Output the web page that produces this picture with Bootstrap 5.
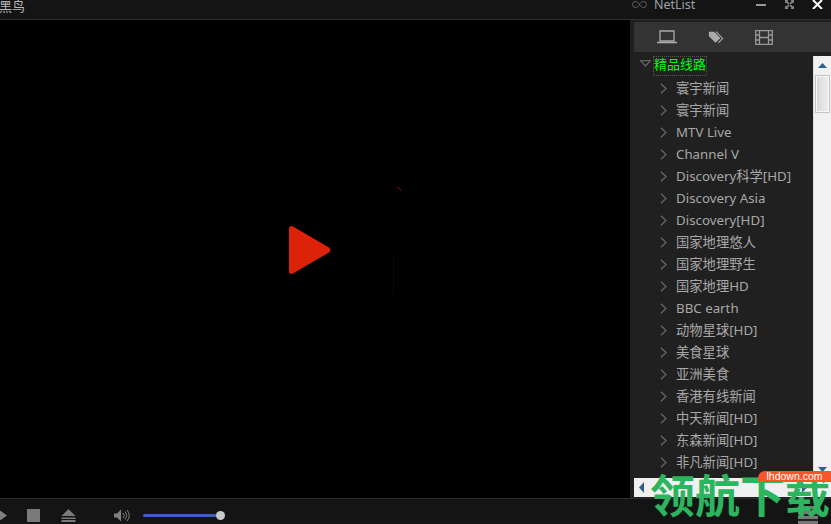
<!DOCTYPE html>
<html lang="zh">
<head>
<meta charset="utf-8">
<title>NetList</title>
<link href="https://cdn.jsdelivr.net/npm/bootstrap@5.3.0/dist/css/bootstrap.min.css" rel="stylesheet">
<style>
html,body{height:100%;margin:0;overflow:hidden;background:#000}
body{font-family:"Noto Sans","Noto Sans CJK SC",sans-serif;width:831px;height:524px;position:relative}
.shell{width:831px;height:524px}
.topbar{height:20px;background:#141414;border-bottom:1px solid #2e2e2e}
.app-title{font-size:13px;line-height:12px;color:#b9b9b9;margin-left:-1px;font-family:"Noto Sans CJK SC",sans-serif}
.right-title{width:199px}
.net-label{font-size:12.500px;color:#9aa3ad;margin-left:7px;line-height:10px}
.winbtn{width:28px;height:9px;display:flex;align-items:center;justify-content:center}
.mainrow{height:478px}
.stage{width:630px;background:#000;padding:0 10px 18px 0;position:relative}
.specks{position:absolute;left:390px;top:164px}
.panel{width:201px;background:#1f1f1f;padding-top:2px;padding-left:4px}
.tabs{height:30px;background:#333;padding-left:23px;gap:31px}
.treewrap{height:426px;background:#202020;padding-top:4px}
.tree{width:179px;overflow:hidden}
.node{height:22px;font-size:13.300px;line-height:22px;color:#a8a8a8;white-space:nowrap}
.node.child{padding-left:26px;gap:9px}
.root{padding-left:6px;gap:2px;height:21px;margin-bottom:0}
.root-label{color:#0f0;outline:1px dotted #555;outline-offset:-1px;font-size:13px;line-height:17px;height:20px;padding:0 1px}
.vbar{width:18px;background:#f1f1f1;border-left:1px solid #ddd}
.sb-btn{height:18px}
.sb-thumb{height:38px;margin:1px 1px 0;background:linear-gradient(90deg,#d8d8d8,#eee);border:1px solid #c4c4c4;box-shadow:inset 0 0 0 1px #f8f8f8}
.hbar{height:19px;background:#f0f0f0;padding-left:5px;padding-right:24px}
.bottombar{height:26px;background:#141414;border-top:1px solid #2c2c2c;padding-top:10px}
.ctrl{display:block;flex:none}
.ctrl-stop{margin-left:20px}
.ctrl-eject{margin-left:21px}
.ctrl-vol{margin-left:38px}
.vol{width:77px;height:3px;background:#3d5fc0;border-radius:2px;position:relative;margin:5px 0 0 13px}
.vol-knob{position:absolute;right:-5px;top:-3px;width:9px;height:9px;background:#c9c9c9;border-radius:50%}
.mark-text{position:absolute;left:650px;top:463px;font-family:"Noto Sans CJK SC",sans-serif;font-weight:700;font-size:45px;line-height:61px;color:#2cb45f;white-space:nowrap}
.mark-badge{position:absolute;left:758px;top:471px;width:73px;height:11px;background:#f7562b;border-radius:7px 0 0 0;color:#fff;font-family:"Liberation Sans",sans-serif;font-size:10.500px;line-height:11px;text-align:center}
.grip{position:absolute;left:798px;top:506px;width:20px;height:18px;background:repeating-linear-gradient(#777 0 3px,#222 3px 5px)}
</style>
</head>
<body>
<div class="shell d-flex flex-column">
  <div class="topbar d-flex justify-content-between align-items-start">
    <div class="app-title">黑鸟</div>
    <div class="right-title d-flex align-items-start">
      <svg width="15" height="9" viewBox="0 0 15 9" class="ctrl"><path d="M7.500 4.500C6 2 4.500 1.500 3.500 1.500a3 3 0 0 0 0 6c2 0 3-1.500 4-3s2-3 4-3a3 3 0 0 1 0 6c-1 0-2.500-.5-4-3z" fill="none" stroke="#666"/></svg>
      <div class="net-label">NetList</div>
      <div class="d-flex ms-auto">
        <div class="winbtn"><svg width="10" height="2"><rect width="10" height="2" fill="#999"/></svg></div>
        <div class="winbtn"><svg width="11" height="9" viewBox="0 0 11 11"><path d="M0 0h4L3 1.500 5.500 4 4 5.500 1.500 3 0 4zM11 0v4L9.500 3 7 5.500 5.500 4 8 1.500 7 0zM0 11V7l1.500 1L4 5.500 5.500 7 3 9.500 4 11zM11 11H7l1-1.500L5.500 7 7 5.500 9.500 8 11 7z" fill="#888"/></svg></div>
        <div class="winbtn"><svg width="11" height="9" viewBox="0 0 11 9"><path d="M1 0l9 9M10 0L1 9" stroke="#fff" stroke-width="2"/></svg></div>
      </div>
    </div>
  </div>
  <div class="mainrow d-flex">
    <div class="stage d-flex align-items-center justify-content-center">
      <svg width="44" height="52" viewBox="0 0 44 52" class="ctrl"><path d="M5 2.500 L41 23.500 Q44 26 41 28.500 L5 49.500 Q1 51 1 47 V5 Q1 1 5 2.500Z" fill="#dc2208"/></svg>
      <svg class="specks" width="14" height="114" viewBox="0 0 14 114"><path d="M7 3q3 1 4 4" fill="none" stroke="#7a0d05" stroke-width="1"/><path d="M3.500 70v40" stroke="#1d0402"/></svg>
    </div>
    <div class="panel d-flex flex-column">
      <div class="tabs d-flex align-items-center">
        <svg width="20" height="14" viewBox="0 0 20 14" class="ctrl"><path d="M3 1h14v10H3z" fill="none" stroke="#aaa" stroke-width="1.300"/><path d="M0 12.500h20" stroke="#aaa" stroke-width="1.600"/></svg>
        <svg width="16" height="15" viewBox="0 0 18 15" class="ctrl"><path d="M1 1h6l7 7-5.500 5.500L1 6z" fill="#aaa"/><path d="M9 1l7.500 7.500-5 5" fill="none" stroke="#aaa" stroke-width="1.200"/></svg>
        <svg width="18" height="15" viewBox="0 0 18 15" class="ctrl"><path d="M.7.700h16.600v13.600H.7zM4.500.700v13.600M13.500.700v13.600M.7 5h3.800M.7 10h3.800M13.500 5h3.800M13.500 10h3.800M4.500 7.500h9" fill="none" stroke="#999" stroke-width="1.300"/></svg>
      </div>
      <div class="treewrap d-flex">
        <div class="tree flex-grow-1">
          <div class="node root d-flex align-items-start">
            <svg width="11" height="7" viewBox="0 0 11 7" class="ctrl mt-1"><path d="M.7.700h9.600L5.500 6z" fill="none" stroke="#666" stroke-width="1.200"/></svg>
            <span class="root-label">精品线路</span>
          </div>
          <div class="node child d-flex align-items-center"><svg width="7" height="11" viewBox="0 0 7 11" class="ctrl"><path d="M1 .7l5 4.800-5 4.800" fill="none" stroke="#666" stroke-width="1.300"/></svg><span>寰宇新闻</span></div>
          <div class="node child d-flex align-items-center"><svg width="7" height="11" viewBox="0 0 7 11" class="ctrl"><path d="M1 .7l5 4.800-5 4.800" fill="none" stroke="#666" stroke-width="1.300"/></svg><span>寰宇新闻</span></div>
          <div class="node child d-flex align-items-center"><svg width="7" height="11" viewBox="0 0 7 11" class="ctrl"><path d="M1 .7l5 4.800-5 4.800" fill="none" stroke="#666" stroke-width="1.300"/></svg><span>MTV Live</span></div>
          <div class="node child d-flex align-items-center"><svg width="7" height="11" viewBox="0 0 7 11" class="ctrl"><path d="M1 .7l5 4.800-5 4.800" fill="none" stroke="#666" stroke-width="1.300"/></svg><span>Channel V</span></div>
          <div class="node child d-flex align-items-center"><svg width="7" height="11" viewBox="0 0 7 11" class="ctrl"><path d="M1 .7l5 4.800-5 4.800" fill="none" stroke="#666" stroke-width="1.300"/></svg><span>Discovery科学[HD]</span></div>
          <div class="node child d-flex align-items-center"><svg width="7" height="11" viewBox="0 0 7 11" class="ctrl"><path d="M1 .7l5 4.800-5 4.800" fill="none" stroke="#666" stroke-width="1.300"/></svg><span>Discovery Asia</span></div>
          <div class="node child d-flex align-items-center"><svg width="7" height="11" viewBox="0 0 7 11" class="ctrl"><path d="M1 .7l5 4.800-5 4.800" fill="none" stroke="#666" stroke-width="1.300"/></svg><span>Discovery[HD]</span></div>
          <div class="node child d-flex align-items-center"><svg width="7" height="11" viewBox="0 0 7 11" class="ctrl"><path d="M1 .7l5 4.800-5 4.800" fill="none" stroke="#666" stroke-width="1.300"/></svg><span>国家地理悠人</span></div>
          <div class="node child d-flex align-items-center"><svg width="7" height="11" viewBox="0 0 7 11" class="ctrl"><path d="M1 .7l5 4.800-5 4.800" fill="none" stroke="#666" stroke-width="1.300"/></svg><span>国家地理野生</span></div>
          <div class="node child d-flex align-items-center"><svg width="7" height="11" viewBox="0 0 7 11" class="ctrl"><path d="M1 .7l5 4.800-5 4.800" fill="none" stroke="#666" stroke-width="1.300"/></svg><span>国家地理HD</span></div>
          <div class="node child d-flex align-items-center"><svg width="7" height="11" viewBox="0 0 7 11" class="ctrl"><path d="M1 .7l5 4.800-5 4.800" fill="none" stroke="#666" stroke-width="1.300"/></svg><span>BBC earth</span></div>
          <div class="node child d-flex align-items-center"><svg width="7" height="11" viewBox="0 0 7 11" class="ctrl"><path d="M1 .7l5 4.800-5 4.800" fill="none" stroke="#666" stroke-width="1.300"/></svg><span>动物星球[HD]</span></div>
          <div class="node child d-flex align-items-center"><svg width="7" height="11" viewBox="0 0 7 11" class="ctrl"><path d="M1 .7l5 4.800-5 4.800" fill="none" stroke="#666" stroke-width="1.300"/></svg><span>美食星球</span></div>
          <div class="node child d-flex align-items-center"><svg width="7" height="11" viewBox="0 0 7 11" class="ctrl"><path d="M1 .7l5 4.800-5 4.800" fill="none" stroke="#666" stroke-width="1.300"/></svg><span>亚洲美食</span></div>
          <div class="node child d-flex align-items-center"><svg width="7" height="11" viewBox="0 0 7 11" class="ctrl"><path d="M1 .7l5 4.800-5 4.800" fill="none" stroke="#666" stroke-width="1.300"/></svg><span>香港有线新闻</span></div>
          <div class="node child d-flex align-items-center"><svg width="7" height="11" viewBox="0 0 7 11" class="ctrl"><path d="M1 .7l5 4.800-5 4.800" fill="none" stroke="#666" stroke-width="1.300"/></svg><span>中天新闻[HD]</span></div>
          <div class="node child d-flex align-items-center"><svg width="7" height="11" viewBox="0 0 7 11" class="ctrl"><path d="M1 .7l5 4.800-5 4.800" fill="none" stroke="#666" stroke-width="1.300"/></svg><span>东森新闻[HD]</span></div>
          <div class="node child d-flex align-items-center"><svg width="7" height="11" viewBox="0 0 7 11" class="ctrl"><path d="M1 .7l5 4.800-5 4.800" fill="none" stroke="#666" stroke-width="1.300"/></svg><span>非凡新闻[HD]</span></div>
        </div>
        <div class="vbar d-flex flex-column">
          <div class="sb-btn d-flex align-items-center justify-content-center"><svg width="9" height="5" class="ctrl"><path d="M0 5L4.500 0 9 5z" fill="#2f5f8f"/></svg></div>
          <div class="sb-thumb"></div>
          <div class="sb-btn mt-auto d-flex align-items-center justify-content-center"><svg width="9" height="5" class="ctrl"><path d="M0 0L4.500 5 9 0z" fill="#2f5f8f"/></svg></div>
        </div>
      </div>
      <div class="hbar d-flex align-items-center justify-content-between">
        <svg width="5" height="11" class="ctrl"><path d="M5 0L0 5.500 5 11z" fill="#2f5f8f"/></svg>
        <svg width="5" height="11" class="ctrl"><path d="M0 0L5 5.500 0 11z" fill="#2f5f8f"/></svg>
      </div>
    </div>
  </div>
  <div class="bottombar d-flex align-items-start">
    <svg width="7" height="13" viewBox="0 0 7 13" class="ctrl"><path d="M-2 0l9 6.500-9 6.500z" fill="#808080"/></svg>
    <svg width="13" height="13" class="ctrl ctrl-stop"><rect width="13" height="13" fill="#7a7a7a"/></svg>
    <svg width="15" height="13" viewBox="0 0 15 13" class="ctrl ctrl-eject"><path d="M7.500 0l7 7H.5z M.5 8.500h14V10H.5z M.5 11h14v2H.5z" fill="#7a7a7a"/></svg>
    <svg width="16" height="13" viewBox="0 0 16 13" class="ctrl ctrl-vol"><path d="M0 4.500h3l4-4v12l-4-4H0z" fill="#808080"/><path d="M9 4a3.500 3.500 0 0 1 0 5M11 2.500a6 6 0 0 1 0 8M13 1a8 8 0 0 1 0 11" fill="none" stroke="#808080"/></svg>
    <div class="vol"><div class="vol-knob"></div></div>
  </div>
</div>
<div class="grip"></div>
<div class="mark-text">领航下载</div>
<div class="mark-badge">lhdown.com</div>
</body>
</html>
